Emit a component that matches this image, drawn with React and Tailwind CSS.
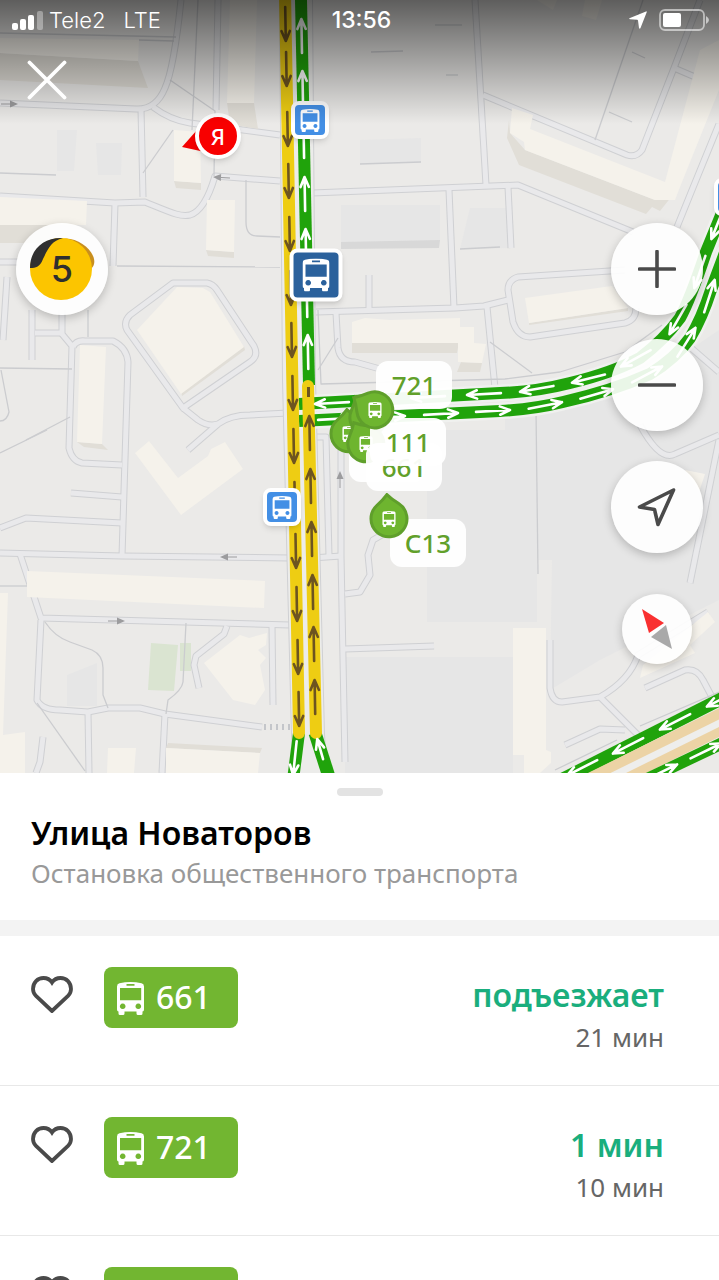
const routes = [
  { id: 1, number: "661", first: "подъезжает", next: "21 мин" },
  { id: 2, number: "721", first: "1 мин", next: "10 мин" },
  { id: 3, number: "", first: "", next: "" },
];

const MAP_W = 719;
const MAP_H = 773;

// side streets, drawn twice: a grey casing and a lighter fill
const streets = [
  "M0 103 L136 109 Q156 110 165 88 Q174 68 181 0",
  "M141 109 L143 197",
  "M153 107 Q170 120 190 123 L280 135",
  "M218 0 L216 110",
  "M280 181 L215 176 C208 200 200 212 190 215 C180 217 172 213 145 202 L115 203 L0 196",
  "M115 204 L113 266",
  "M0 262 H18",
  "M173 283 H207 Q213 284 217 290 L254 346 Q259 356 250 362 L183 408 L127 330 Q123 322 130 315 Z",
  "M183 408 L198 420 Q208 427 218 424 Q230 415 250 415 L288 413",
  "M218 424 L188 450",
  "M73 347 Q76 340 85 341 L113 341 Q127 348 128 362 L122 556",
  "M32 310 V360",
  "M62 310 V334 L72 346 L69 448 Q72 461 82 463 L122 465",
  "M35 333 H62",
  "M7 277 L3 340",
  "M71 493 L122 497",
  "M0 528 L26 518 L122 523",
  "M0 553 L122 556 L290 558",
  "M20 554 L41 618 L290 625",
  "M41 620 L37 700 Q42 710 60 710 L88 712 L108 708 L140 708 L165 714 L262 727",
  "M88 712 L89 773",
  "M165 714 L162 773",
  "M227 626 L224 634 L196 656 L194 665 L199 688",
  "M272 626 L273 705",
  "M43 737 L40 762 L36 773",
  "M475 0 L486 185",
  "M483 95 L627 155 Q636 158 642 150 L674 68 L700 0",
  "M674 68 L702 80",
  "M312 193 L518 185 L633 232",
  "M508 187 L511 248",
  "M449 190 L454 308",
  "M719 124 L692 190 L677 227",
  "M316 312 L455 308 L484 306 L508 300",
  "M625 270 L518 277 Q508 280 508 290 L513 322 Q518 337 530 337 L625 323 Q636 320 636 308",
  "M369 275 V310",
  "M336 313 L338 348 Q340 362 355 362 L380 369",
  "M487 307 L495 388",
  "M316 437 H326 L329 556",
  "M341 450 L341 556 L345 762",
  "M312 558 L341 556",
  "M345 594 L360 592 L370 575 L368 555 L373 540 L387 532",
  "M345 649 L434 646",
  "M550 640 V688 Q552 702 562 702 L600 697 Q630 680 638 655 L708 612",
  "M600 697 L638 735",
  "M565 745 L600 729 L625 730",
  "M645 688 L685 670 Q697 668 703 680 L712 697",
  "M719 440 L690 583",
  "M640 425 Q660 462 675 454 L719 435",
  "M690 347 L719 372",
];

const paths = [
  "M0 33 L176 37",
  "M139 40 L174 41",
  "M198 0 L192 130",
  "M170 80 L215 111 L214 176",
  "M173 130 L143 173",
  "M0 173 L56 175",
  "M117 266 L280 267",
  "M246 180 V222 Q246 236 257 236 L280 237",
  "M88 310 V337",
  "M0 368 L72 369",
  "M1 370 L9 412 Q7 421 0 421",
  "M26 440 L70 417",
  "M0 453 L47 430",
  "M0 586 H27",
  "M45 622 Q55 637 70 642 L92 650 Q103 655 103 668 V695 L108 708",
  "M186 623 L183 682 Q182 690 168 700 L166 714",
  "M37 703 L85 771",
  "M643 0 L595 140",
  "M435 25 H462",
  "M371 52 L403 51",
  "M446 75 H458",
  "M609 112 L632 122",
  "M632 52 L645 58",
  "M360 164 L421 162",
  "M318 370 L338 338",
  "M490 342 L532 373",
  "M318 310 L321 384 L505 379 L560 372 L625 352 L662 325",
  "M315 770 L314 735",
  "M640 726 L719 692",
  "M555 770 L617 740",
  "M460 249 L500 247",
  "M536 410 L538 574",
];

const buildings = [
  "0,38 139,40 138,61 0,53",
  "230,0 257,0 254,103 227,103",
  "174,130 200,132 201,183 174,181",
  "207,200 235,200 234,252 206,250",
  "0,197 87,201 86,225 0,225",
  "137,330 177,287 203,288 210,292 244,347 181,394",
  "80,345 106,347 102,444 77,442",
  "135,453 149,441 178,478 208,456 211,449 225,442 243,469 181,515",
  "27,571 265,581 264,608 27,597",
  "0,593 8,593 3,735 25,732 25,773 0,773",
  "204,663 240,635 249,638 267,633 266,645 258,650 266,658 260,665 265,690 255,705 233,700",
  "108,748 136,748 134,773 107,773",
  "166,748 260,753 258,773 166,773",
  "352,322 365,318 390,320 460,318 460,327 474,327 474,343 486,344 482,363 458,362 458,343 352,343",
  "512,108 533,115 530,129 665,182 700,50 719,40 719,90 680,187 675,200 655,200 525,150 524,142 510,133",
  "525,298 612,286 628,308 529,323",
  "513,628 546,628 546,750 551,752 551,763 540,773 524,773 524,755 513,755",
  "685,470 705,474 699,492",
  "640,678 643,665 708,612 715,622 690,645 695,653",
  "537,0 557,0 553,10",
  "585,0 602,0 596,20 582,16",
];

const buildingSides = [
  "0,53 138,61 148,88 0,80",
  "227,103 254,103 258,129 230,124",
  "174,181 201,183 201,190 176,188",
  "206,250 234,252 234,258 208,256",
  "0,225 50,225 50,243 0,243",
  "181,391 244,346 245,350 182,396",
  "77,442 102,444 108,450 84,447",
  "352,343 459,342 457,353 352,353",
  "461,362 482,363 480,372 457,372",
  "509,120 507,138 519,165 646,214 652,207 660,211 672,196 655,200 525,150 510,133",
  "166,748 168,743 262,748 260,753",
  "529,323 628,308 628,311 529,325",
];

const yards = [
  "505,418 600,400 660,370 719,330 719,600 600,660 550,690 552,560 538,560 505,500",
  "427,430 537,430 537,622 427,622",
  "345,657 513,657 513,773 345,773",
  "57,130 77,130 74,171 57,171",
  "96,143 122,143 121,175 98,175",
  "341,205 440,205 440,242 341,242",
  "470,208 510,208 510,248 460,249",
  "360,140 421,138 421,162 360,164",
  "67,675 97,663 97,706 67,706",
];

const crossWest =
  "M299 404 L500 393 Q535 392 570 383 Q612 373 640 358 Q664 340 680 318 Q690 300 706 252 L724 208";
const crossEast =
  "M299 421 L500 411 Q535 409 563 402 Q612 391 650 374 Q676 358 690 338 Q702 318 711 290 L726 250";

const arrows = [
  // main avenue, southbound
  ...[42, 87, 147, 199, 252, 306, 358, 411, 464, 517, 569, 622, 675, 727].map((y) => ({
    x: 285 + y * 0.0195,
    y,
    angle: 179,
    color: "#6d5420",
  })),
  // main avenue, northbound
  ...[18, 70, 123, 176, 228, 282, 334].map((y) => ({ x: 301 + y * 0.02, y, angle: -1, color: "#fff" })),
  ...[415, 468, 521, 574, 626, 679].map((y) => ({ x: 301 + y * 0.02, y, angle: -1, color: "#6d5420" })),
  // cross street, westbound
  { x: 314, y: 404, angle: 267, color: "#fff" },
  { x: 410, y: 398, angle: 267, color: "#fff" },
  { x: 466, y: 395, angle: 267, color: "#fff" },
  { x: 519, y: 392, angle: 260, color: "#fff" },
  { x: 571, y: 383, angle: 256, color: "#fff" },
  { x: 620, y: 367, angle: 241, color: "#fff" },
  { x: 669, y: 335, angle: 210, color: "#fff" },
  { x: 694, y: 289, angle: 199, color: "#fff" },
  { x: 711, y: 240, angle: 202, color: "#fff" },
  // cross street, eastbound
  { x: 353, y: 418, angle: 87, color: "#fff" },
  { x: 406, y: 416, angle: 87, color: "#fff" },
  { x: 459, y: 413, angle: 87, color: "#fff" },
  { x: 511, y: 410, angle: 87, color: "#fff" },
  { x: 563, y: 402, angle: 79, color: "#fff" },
  { x: 614, y: 389, angle: 74, color: "#fff" },
  { x: 663, y: 366, angle: 62, color: "#fff" },
  { x: 696, y: 327, angle: 32, color: "#fff" },
  { x: 715, y: 279, angle: 18, color: "#fff" },
  // ring road in the corner
  { x: 706, y: 707, angle: 243, color: "#fff" },
  { x: 659, y: 730, angle: 243, color: "#fff" },
  { x: 612, y: 754, angle: 243, color: "#fff" },
  { x: 566, y: 776, angle: 243, color: "#fff" },
  { x: 678, y: 764, angle: 64, color: "#fff" },
  { x: 722, y: 743, angle: 64, color: "#fff" },
  { x: 293, y: 776, angle: 186, color: "#fff" },
  { x: 317, y: 738, angle: -16, color: "#fff", len: 22 },
];

const smallArrows = [
  { x: 18, y: 104, angle: 90 },
  { x: 213, y: 177, angle: -87 },
  { x: 220, y: 557, angle: -90 },
  { x: 125, y: 621, angle: 90 },
  { x: 340, y: 471, angle: 0 },
];

function MapDrawing() {
  return (
    <svg viewBox="0 0 719 773" className="block h-full w-full" aria-hidden="true">
      <rect width="719" height="773" fill="#ebeae8" />
      {yards.map((p) => (
        <polygon key={p} points={p} fill="#e6e6e6" />
      ))}
      <polygon points="341,242 440,240 439,248 341,249" fill="#d8d8d8" />
      <polygon points="151,643 178,645 174,691 148,690" fill="#dae4d1" />
      <polygon points="180,643 191,643 191,671 180,671" fill="#dae4d1" />

      <g fill="none" strokeLinejoin="round">
        <g stroke="#cfd0d3" strokeWidth="7">
          {streets.map((d) => (
            <path key={d} d={d} />
          ))}
        </g>
        <g stroke="#e9e9eb" strokeWidth="5">
          {streets.map((d) => (
            <path key={d} d={d} />
          ))}
        </g>
        <g stroke="#cbcccf" strokeWidth="1.3">
          {paths.map((d) => (
            <path key={d} d={d} />
          ))}
        </g>
        <path d="M264 727 H290" stroke="#c4c6ca" strokeWidth="6" strokeDasharray="2 4" />
      </g>

      {buildingSides.map((p) => (
        <polygon key={p} points={p} fill="#e1ded7" />
      ))}
      {buildings.map((p) => (
        <polygon key={p} points={p} fill="#f5f2eb" />
      ))}

      {smallArrows.map((a) => (
        <g key={`${a.x}-${a.y}`} transform={`translate(${a.x} ${a.y}) rotate(${a.angle})`}>
          <path d="M0 0 L3.5 8 H-3.5 Z" fill="#9c9c9e" />
          <path d="M0 8 V17" stroke="#9c9c9e" strokeWidth="1" />
        </g>
      ))}

      <g fill="none" strokeLinejoin="round">
        <path d="M296 0 L299 380 L308 735 L311 780" stroke="#cfd0d3" strokeWidth="34" />
        <path d="M296 0 L299 380 L308 735 L311 780" stroke="#ececea" strokeWidth="32" />

        <path d={crossWest} stroke="#f0f1ef" strokeWidth="17" />
        <path d={crossEast} stroke="#f0f1ef" strokeWidth="17" />
        <path d={crossWest} stroke="#20a30b" strokeWidth="12" />
        <path d={crossEast} stroke="#20a30b" strokeWidth="12" />

        <path d="M301 0 L309 385" stroke="#20a30b" strokeWidth="12" />
        <path d="M299 733 L293 780" stroke="#20a30b" strokeWidth="12" />
        <path d="M315 733 L330 780" stroke="#20a30b" strokeWidth="13" />
        <path d="M285 -6 L299 733" stroke="#eecd13" strokeWidth="12" strokeLinecap="round" />
        <path d="M308 386 L316 733" stroke="#eecd13" strokeWidth="12" strokeLinecap="round" />
        <path d="M308.5 387 V397" stroke="#6d5420" strokeWidth="3" />

        <path d="M600 781 L731 716" stroke="#eeeeec" strokeWidth="44" />
        <path d="M559 781 L731 694" stroke="#20a30b" strokeWidth="13" />
        <path d="M583 781 L731 708" stroke="#ecd3a5" strokeWidth="10" />
        <path d="M620 781 L731 726" stroke="#ecd3a5" strokeWidth="9" />
        <path d="M643 781 L731 739" stroke="#20a30b" strokeWidth="12" />
      </g>

      {arrows.map((a) => (
        <path
          key={`${a.x}-${a.y}`}
          d={`M0 ${a.len || 35} V1 M-4.2 11 L0 1 L4.2 11`}
          transform={`translate(${a.x} ${a.y}) rotate(${a.angle})`}
          fill="none"
          stroke={a.color}
          strokeWidth="2.6"
          strokeLinecap="round"
          strokeLinejoin="round"
        />
      ))}
    </svg>
  );
}

function BusIcon({ className }) {
  return (
    <svg viewBox="0 0 27 33" className={className} fill="currentColor" aria-hidden="true">
      <path
        fillRule="evenodd"
        d="M2.500 1.200 Q13.500 -1 24.500 1.200 Q27 1.800 27 4.500 V27.500 Q27 29.500 25.500 29.500 V31.500 Q25.500 33 24 33 H21 Q19.500 33 19.500 31.500 V29.500 H7.500 V31.500 Q7.500 33 6 33 H3 Q1.500 33 1.500 31.500 V29.500 Q0 29.500 0 27.500 V4.500 Q0 1.800 2.500 1.200 Z M9.500 2 V3.800 H17.500 V2 Z M3 6 V18.300 H24.200 V6 Z M5.700 21.500 a2.800 2.800 0 1 0 0.010 0 Z M21.300 21.500 a2.800 2.800 0 1 0 0.010 0 Z"
      />
    </svg>
  );
}

// places its children at map coordinates, so they follow the map when it scales
function MapPoint({ x, y, children }) {
  return (
    <div
      className="absolute -translate-x-1/2 -translate-y-1/2"
      style={{ left: `${(x / MAP_W) * 100}%`, top: `${(y / MAP_H) * 100}%` }}
    >
      {children}
    </div>
  );
}

function Stop({ x, y }) {
  return (
    <MapPoint x={x} y={y}>
      <div className="flex size-[38px] items-center justify-center rounded-lg border-4 border-white bg-[#438fe5] text-white shadow-md">
        <BusIcon className="h-[23px] w-5" />
      </div>
    </MapPoint>
  );
}

function BusPin({ x, y, turn }) {
  return (
    <MapPoint x={x} y={y}>
      <div className="relative flex size-[52px] items-center justify-center">
        <svg viewBox="0 0 52 52" className="absolute inset-0" aria-hidden="true">
          <path
            transform={`rotate(${turn} 26 26)`}
            d="M26 1.500 C29 5 33 8.500 37 11.500 A18 18 0 1 1 15 11.500 C19 8.500 23 5 26 1.500 Z"
            fill="#6eb52f"
            stroke="#5f9f2b"
            strokeWidth="3"
          />
        </svg>
        <BusIcon className="relative h-4 w-[14px] text-white" />
      </div>
    </MapPoint>
  );
}

function BusLabel({ x, y, children }) {
  return (
    <MapPoint x={x} y={y}>
      <div className="flex h-12 w-[76px] items-center justify-center rounded-xl bg-white/95 text-[26px] font-medium text-[#61a02a]">
        {children}
      </div>
    </MapPoint>
  );
}

function RoundButton({ label, children }) {
  return (
    <button
      type="button"
      aria-label={label}
      className="flex size-[92px] items-center justify-center rounded-full bg-white/90 text-[#4a4a4a] shadow-[0_3px_10px_rgba(0,0,0,0.22)]"
    >
      {children}
    </button>
  );
}

function StatusBar() {
  return (
    <div className="grid h-10 grid-cols-3 items-center px-3 font-['Inter',sans-serif] text-[23px] text-white">
      <div className="flex items-center gap-[6px] whitespace-nowrap text-[22px] font-light">
        <svg viewBox="0 0 31 19" className="h-[19px] w-[31px]" fill="currentColor" aria-hidden="true">
          <rect x="0" y="12" width="6" height="7" rx="2" />
          <rect x="8" y="8" width="6" height="11" rx="2" />
          <rect x="16" y="4" width="6" height="15" rx="2" />
          <rect x="25" y="0" width="6" height="19" rx="2" opacity="0.35" />
        </svg>
        <span>Tele2</span>
        <span className="ml-3">LTE</span>
      </div>
      <div className="ml-1 text-center font-medium">13:56</div>
      <div className="-mr-[2px] flex items-center justify-end gap-3">
        <svg viewBox="0 0 18 18" className="size-[18px]" fill="currentColor" aria-hidden="true">
          <path d="M17 0.500 Q18 0 17.700 1.300 L11.500 17 Q10.800 18.400 10 17 L9 9.500 Q9 8.800 8.200 8.700 L1 8.200 Q-0.600 7.800 1 7 Z" />
        </svg>
        <svg viewBox="0 0 50 22" className="h-[22px] w-[50px]" aria-hidden="true">
          <rect x="1" y="1" width="44" height="20" rx="5" fill="none" stroke="#fff" strokeWidth="1.800" opacity="0.550" />
          <rect x="4" y="4" width="18" height="14" rx="2" fill="#fff" />
          <path d="M47 7 Q50 9 50 11 Q50 13 47 15 Z" fill="#fff" opacity="0.600" />
        </svg>
      </div>
    </div>
  );
}

function RouteRow({ route }) {
  return (
    <li className="flex h-[150px] shrink-0 items-start border-b border-[#e8e8e8] pt-[31px] pr-[55px] pl-[31px]">
      <button type="button" aria-label="В избранное" className="mt-2 text-[#4a4a4a]">
        <svg viewBox="0 0 42 38" className="h-[38px] w-[42px]" fill="none" aria-hidden="true">
          <path
            d="M21 36 L5 21 C2.500 18.500 2 16 2 14 C2 7.500 6.500 3 12.500 3 C16 3 19 4.500 21 7.500 C23 4.500 26 3 29.500 3 C35.500 3 40 7.500 40 14 C40 16 39.500 18.500 37 21 Z"
            stroke="currentColor"
            strokeWidth="3.800"
          />
        </svg>
      </button>
      <div className="ml-[31px] flex h-[61px] w-[134px] items-center gap-3 rounded-lg bg-[#72b631] pb-[2px] pl-[13px] text-[32px] font-medium text-white">
        <BusIcon className="mt-1 h-[33px] w-[27px]" />
        <span>{route.number}</span>
      </div>
      <div className="mt-[6px] ml-auto text-right">
        <p className="text-[32px] leading-[43px] font-semibold text-[#1aae7d]">{route.first}</p>
        <p className="text-[26px] leading-[43px] text-[#666]">{route.next}</p>
      </div>
    </li>
  );
}

export default function App() {
  return (
    <main className="flex h-screen flex-col overflow-hidden bg-white font-['Noto_Sans',sans-serif]">
      <section className="relative aspect-[719/773] w-full shrink-0 overflow-hidden">
        <MapDrawing />

        <Stop x={310} y={120} />
        <Stop x={282} y={507} />
        <Stop x={733} y={197} />
        <MapPoint x={316} y={275}>
          <div className="flex size-[53px] items-center justify-center rounded-lg border-4 border-white bg-[#2b619c] text-white shadow-md">
            <BusIcon className="h-[33px] w-[27px]" />
          </div>
        </MapPoint>

        <MapPoint x={211} y={136}>
          <div className="relative flex h-[46px] w-[60px] items-center justify-end">
            <svg viewBox="0 0 60 46" className="absolute inset-0" aria-hidden="true">
              <path d="M1 34 L16 17 L24 39 Z" fill="#f40000" />
            </svg>
            <div className="relative flex size-[46px] items-center justify-center rounded-full border-4 border-white bg-[#f80000] text-[22px] font-medium text-white shadow-md">
              Я
            </div>
          </div>
        </MapPoint>

        <BusLabel x={387} y={458} />
        <BusPin x={349} y={434} turn={-5} />
        <BusPin x={368} y={418} turn={-30} />
        <BusPin x={366} y={444} turn={-30} />
        <BusLabel x={404} y={467}>
          661
        </BusLabel>
        <BusLabel x={408} y={442}>
          111
        </BusLabel>
        <BusLabel x={414} y={385}>
          721
        </BusLabel>
        <BusPin x={375} y={410} turn={-60} />
        <BusLabel x={428} y={543}>
          С13
        </BusLabel>
        <BusPin x={389} y={519} turn={-5} />

        <header className="absolute inset-x-0 top-0 h-[124px] bg-linear-to-b from-black/60 to-transparent">
          <StatusBar />
          <button type="button" aria-label="Закрыть" className="mt-5 ml-[27px] block text-white">
            <svg viewBox="0 0 40 40" className="size-10" aria-hidden="true">
              <path d="M2.500 2.500 L37.500 37.500 M37.500 2.500 L2.500 37.500" stroke="currentColor" strokeWidth="3.800" strokeLinecap="round" />
            </svg>
          </button>
        </header>

        <div className="absolute top-[223px] left-4">
          <RoundButton label="Пробки: 5 баллов">
            <span className="relative flex size-[66px] items-center justify-center text-[#2f2f2f]">
              <svg viewBox="0 0 66 66" className="absolute inset-0" aria-hidden="true">
                <path d="M32 3 C48 -1 68 16 65 28 Q64 32 60 34 Z" fill="#c98f1e" />
                <circle cx="32" cy="33" r="31" fill="#fcc500" />
                <path d="M1 32 C1 13 15 1 34 2 C22 5 19 13 14 23 C11 31 7 32 1 32 Z" fill="#303030" />
              </svg>
              <span className="relative font-['Inter',sans-serif] text-4xl font-medium">5</span>
            </span>
          </RoundButton>
        </div>

        <div className="absolute top-[223px] right-4 flex flex-col items-center">
          <RoundButton label="Приблизить">
            <svg viewBox="0 0 38 38" className="size-[38px]" aria-hidden="true">
              <path d="M19 1.500 V36.500 M1.500 19 H36.500" stroke="currentColor" strokeWidth="3.600" strokeLinecap="round" />
            </svg>
          </RoundButton>
          <div className="mt-6">
            <RoundButton label="Отдалить">
              <svg viewBox="0 0 38 38" className="size-[38px]" aria-hidden="true">
                <path d="M1.500 19 H36.500" stroke="currentColor" strokeWidth="3.600" strokeLinecap="round" />
              </svg>
            </RoundButton>
          </div>
          <div className="mt-[30px]">
            <RoundButton label="Моё местоположение">
              <svg viewBox="0 0 40 40" className="size-10" fill="none" aria-hidden="true">
                <path d="M36.500 3 L2.500 20 L17.500 22.500 L21 37.500 Z" stroke="currentColor" strokeWidth="3.600" strokeLinejoin="round" />
              </svg>
            </RoundButton>
          </div>
          <button
            type="button"
            aria-label="Компас"
            className="mt-[41px] size-[70px] rounded-full bg-white/90 shadow-[0_3px_10px_rgba(0,0,0,0.22)]"
          >
            <svg viewBox="0 0 70 70" aria-hidden="true">
              <path d="M20 15 L42 29 L27 39 Z" fill="#f93030" />
              <path d="M44 31 L50 55 L29 43 Z" fill="#a9a9a9" />
            </svg>
          </button>
        </div>
      </section>

      <section className="flex min-h-0 flex-1 flex-col overflow-hidden">
        <div className="h-[147px] shrink-0 px-[31px] pt-[15px]">
          <div className="mx-auto h-2 w-[46px] rounded-full bg-[#e3e3e3]"></div>
          <h1 className="mt-[15px] text-[32px] leading-[44px] font-semibold text-black">Улица Новаторов</h1>
          <p className="text-[26px] leading-9 text-[#999]">Остановка общественного транспорта</p>
        </div>
        <ul className="flex flex-col border-t-[16px] border-[#f3f3f3]">
          {routes.map((route) => (
            <RouteRow key={route.id} route={route} />
          ))}
        </ul>
      </section>
    </main>
  );
}
